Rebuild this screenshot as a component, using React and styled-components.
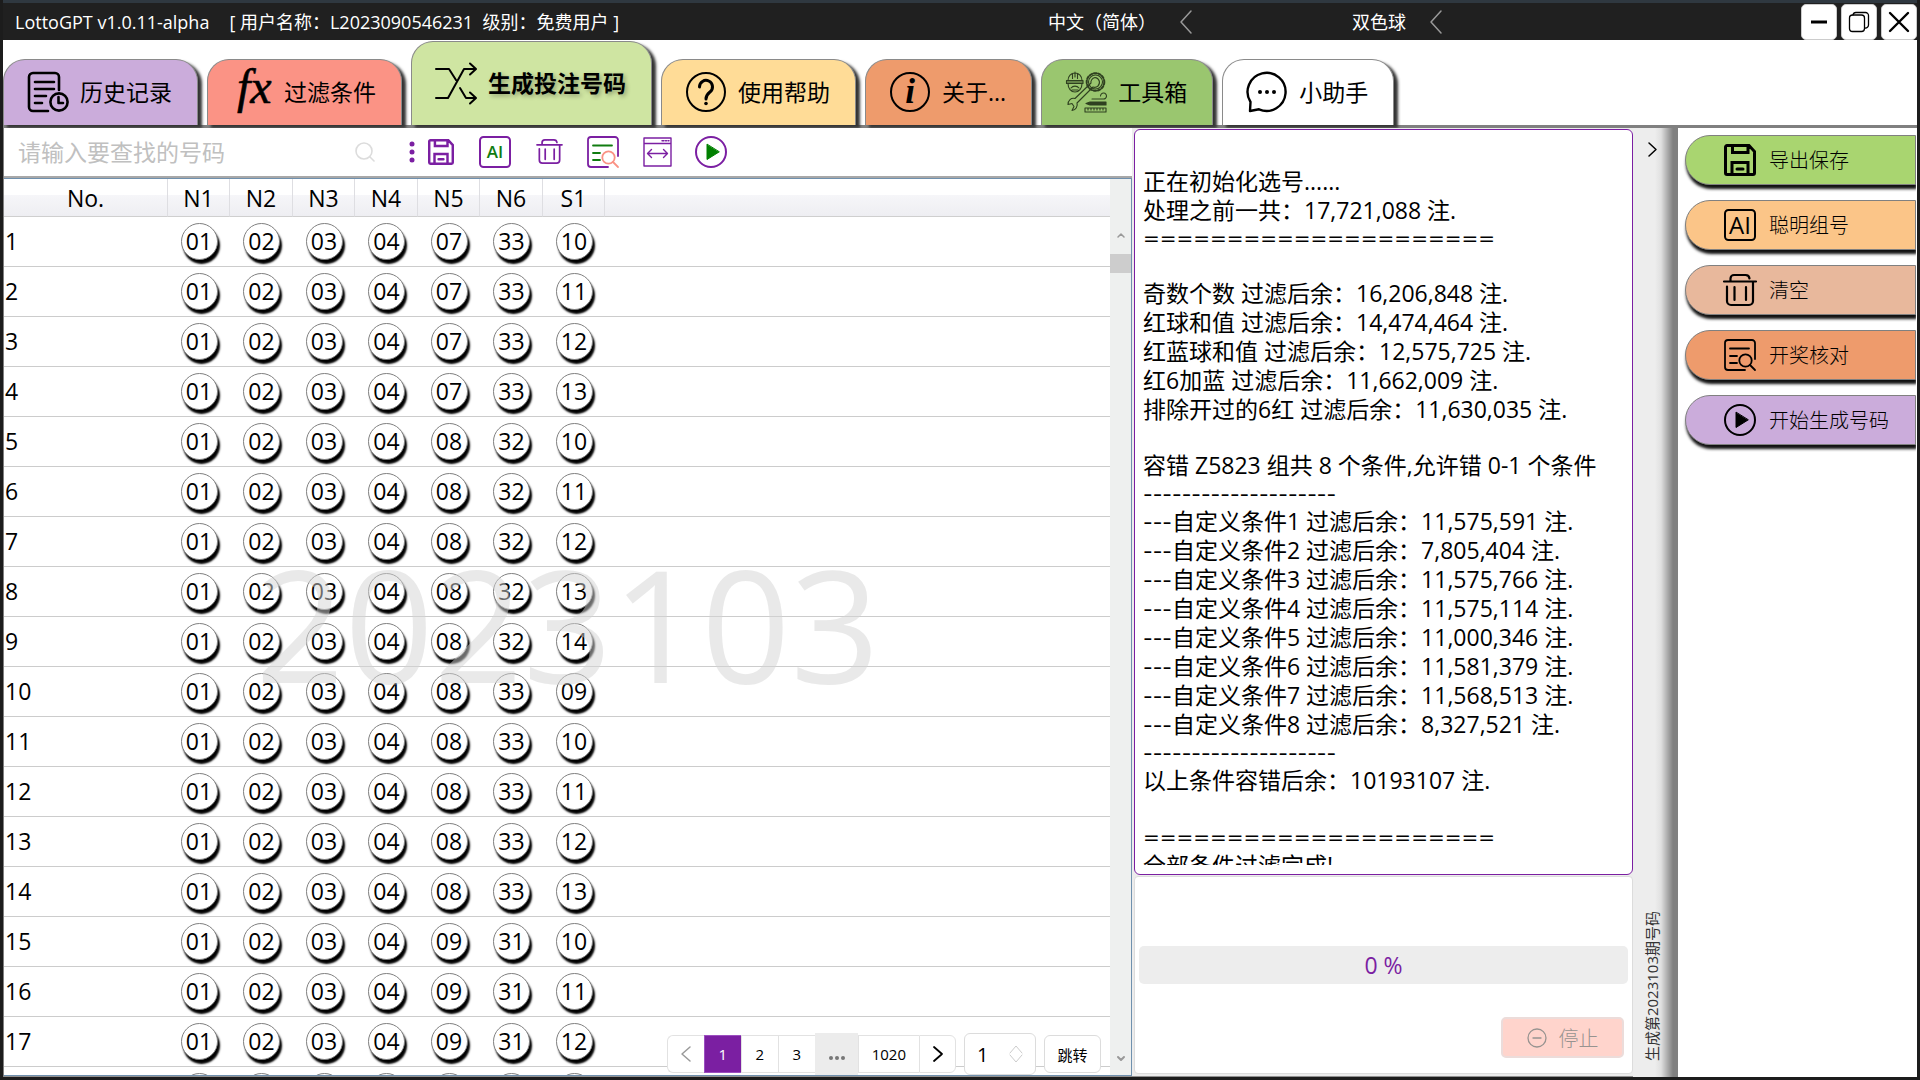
import React, { useState } from "react";
import styled, { createGlobalStyle, css } from "styled-components";

const PURPLE = "#7b1fa2";
const GREEN = "#107c10";
const SALMON = "#fa9284";

const GlobalStyle = createGlobalStyle`
  *, *::before, *::after { box-sizing: border-box; }
  body {
    margin: 0;
    background: #1c1c1c;
    color: #000;
    font-family: "Open Sans", "Noto Sans CJK SC", sans-serif;
    font-size: 23px;
  }
  button, input, select { font: inherit; color: inherit; }
  button { cursor: pointer; }
`;

/* ---------- window frame ---------- */

const Window = styled.div`
  display: flex;
  flex-direction: column;
  height: 100vh;
  padding: 0 3px 3px;
  background: #1c1c1c;
  overflow: hidden;
`;

const TitleBar = styled.header`
  display: flex;
  align-items: center;
  flex: none;
  height: 40px;
  padding-left: 12px;
  border-top: 3px solid #2f3840;
  background: #202020;
  color: #fff;
  font-size: 18px;
  line-height: 24px;
  white-space: pre;
`;

const AppName = styled.h1`
  margin: 0;
  font-size: 18px;
  font-weight: 400;
`;

const Account = styled.span`
  margin-left: 20px;
`;

const Choosers = styled.div`
  display: flex;
  gap: 160px;
  margin-left: auto;
  margin-right: 359px;
`;

const Chooser = styled.label`
  display: flex;
  align-items: center;
  gap: 24px;
`;

const ChooserSelect = styled.select`
  appearance: none;
  field-sizing: content;
  padding: 0;
  border: 0;
  background: transparent;
  color: #fff;
  option { color: #000; }
`;

const WindowButtons = styled.div`
  display: flex;
  gap: 4px;
`;

const WindowButton = styled.button`
  display: grid;
  place-items: center;
  width: 36px;
  height: 36px;
  padding: 0;
  border: 1px solid #ccc;
  border-radius: 5px;
  background: #fff;
  color: #000;
`;

/* ---------- tabs ---------- */

const Tabs = styled.nav`
  display: flex;
  align-items: flex-end;
  gap: 9px;
  flex: none;
  height: 88px;
  border-bottom: 3px solid #808080;
  background: #fff;
`;

const Tab = styled.button`
  display: flex;
  align-items: center;
  gap: 12px;
  height: 66px;
  padding: 0 25px 1px 24px;
  border: 1px solid #8a8a8a;
  border-bottom: 0;
  border-radius: 22px 22px 0 0;
  background: ${(p) => p.$tint};
  box-shadow: 4px 3px 3px #333;
  line-height: 32px;
  white-space: nowrap;
  ${(p) =>
    p.$active &&
    css`
      height: 84px;
      font-weight: 700;
      text-shadow: 2px 2px 4px rgba(0, 0, 0, 0.3);
    `}
`;

/* ---------- body ---------- */

const Body = styled.div`
  display: flex;
  flex: 1;
  min-height: 0;
  background: #fff;
`;

const NumbersPane = styled.main`
  display: flex;
  flex-direction: column;
  flex: 1;
  min-width: 0;
  border-left: 1px solid #808080;
  border-bottom: 1px solid #909090;
`;

const Toolbar = styled.div`
  display: flex;
  align-items: center;
  flex: none;
  height: 50px;
  padding-bottom: 1px;
  border-bottom: 2px solid #a8a8a8;
`;

const Search = styled.label`
  display: flex;
  align-items: center;
  width: 405px;
  padding: 0 34px 0 14px;
`;

const SearchInput = styled.input`
  flex: 1;
  min-width: 0;
  padding: 0;
  border: 0;
  outline: 0;
  background: transparent;
  line-height: 32px;
  &::placeholder { color: #c0c0c0; opacity: 1; }
`;

const ToolButton = styled.button`
  display: grid;
  place-items: center;
  width: 54px;
  height: 47px;
  padding: 0;
  border: 0;
  background: transparent;
`;

const TableFrame = styled.section`
  position: relative;
  display: flex;
  flex: 1;
  min-height: 0;
  border: 1px solid #6f90ae;
  border-left: 0;
  overflow: hidden;
`;

const TableView = styled.div`
  flex: 1;
  min-width: 0;
  overflow: hidden;
`;

const Table = styled.table`
  width: 100%;
  border-collapse: separate;
  border-spacing: 0;
  table-layout: fixed;
  line-height: 32px;
`;

const HeadCell = styled.th`
  height: 38px;
  padding: 0;
  border-right: 1px solid #dedee2;
  border-bottom: 1px solid #cfcfcf;
  background: linear-gradient(#fff 0 42%, #f6f6f9 42%, #eeeef2);
  font-weight: 400;
  &:last-child { border-right: 0; }
`;

const Cell = styled.td`
  height: 50px;
  padding: 0;
  border-bottom: 1px solid #cccccc;
  text-align: center;
`;

const IndexCell = styled(Cell)`
  padding: 0 0 2px 1px;
  text-align: left;
`;

const Ball = styled.span`
  display: grid;
  place-items: center;
  width: 37px;
  height: 37px;
  margin: 0 auto;
  padding-bottom: 2px;
  border: 1px solid #808080;
  border-radius: 50%;
  background: #fff;
  box-shadow: 2px 4px 2px #000;
`;

const Watermark = styled.div`
  position: absolute;
  inset: 0;
  display: grid;
  place-items: center;
  padding-bottom: 8px;
  color: rgba(211, 211, 211, 0.5);
  font-size: 156px;
  line-height: 200px;
  pointer-events: none;
`;

const ScrollTrack = styled.div`
  display: flex;
  flex-direction: column;
  align-items: center;
  flex: none;
  width: 21px;
  padding: 54px 0 14px;
  background: #eef0ef;
`;

const ScrollThumb = styled.div`
  width: 100%;
  height: 19px;
  margin-top: 16px;
  margin-bottom: auto;
  background: #cdcdcd;
`;

const Pager = styled.div`
  position: absolute;
  right: 30px;
  bottom: 0;
  display: flex;
  align-items: center;
  gap: 8px;
  font-size: 15px;
`;

const Pages = styled.div`
  display: flex;
  align-items: center;
`;

const PageButton = styled.button`
  display: grid;
  place-items: center;
  min-width: 37px;
  height: 38px;
  padding: 0 13px;
  border: 1px solid #e2e2e2;
  border-right-width: 0;
  background: #fff;
  line-height: 20px;
  &:first-child { padding: 0; border-radius: 6px 0 0 6px; }
  &:last-child { padding: 0; border-right-width: 1px; border-radius: 0 6px 6px 0; }
  ${(p) =>
    p.$current &&
    css`
      border-color: #9c4fc0;
      background: ${PURPLE};
      color: #fff;
    `}
  ${(p) =>
    p.$more &&
    css`
      height: 42px;
      padding-top: 8px;
      border-color: #ececec;
      background: #ececec;
      color: #777;
    `}
`;

const PageField = styled.label`
  display: flex;
  align-items: center;
  width: 72px;
  height: 42px;
  padding: 0 12px;
  border: 1px solid #dcdcdc;
  border-radius: 6px;
  background: #fff;
  font-size: 20px;
`;

const PageInput = styled.input`
  appearance: textfield;
  flex: 1;
  width: 0;
  padding: 0;
  border: 0;
  outline: 0;
  background: transparent;
  &::-webkit-inner-spin-button { display: none; }
`;

const JumpButton = styled.button`
  width: 57px;
  height: 38px;
  padding: 0;
  border: 1px solid #dcdcdc;
  border-radius: 6px;
  background: #fff;
`;

/* ---------- log ---------- */

const LogPane = styled.section`
  display: flex;
  flex-direction: column;
  flex: none;
  width: 501px;
  gap: 1px;
  padding: 1px 0 2px 2px;
  border-bottom: 1px solid #909090;
  background: #ececec;
`;

const LogBox = styled.div`
  flex: 1;
  min-height: 0;
  padding: 8px 8px 9px;
  border: 1px solid ${PURPLE};
  border-radius: 6px;
  background: #fff;
`;

const LogScroll = styled.div`
  height: 100%;
  overflow: hidden;
  white-space: pre;
`;

const LogLine = styled.div`
  height: 29px;
  line-height: 29px;
`;

const LogRule = styled.div`
  height: 27px;
  line-height: 27px;
`;

const DoubleRule = styled(LogRule)`
  font-family: "DejaVu Sans", sans-serif;
  font-size: 20px;
`;

const Dashes = styled.span`
  font-family: Inter, sans-serif;
  font-size: 21px;
`;

const StatusBox = styled.div`
  display: flex;
  flex-direction: column;
  flex: none;
  height: 198px;
  padding: 69px 4px 15px;
  border: 1px solid #dcdcdc;
  border-radius: 4px;
  background: #fff;
`;

const Progress = styled.div`
  display: grid;
  place-items: center;
  height: 38px;
  border-radius: 5px;
  background: #ededed;
  color: ${PURPLE};
  line-height: 32px;
`;

const StopButton = styled.button`
  display: flex;
  align-items: center;
  justify-content: center;
  gap: 12px;
  width: 123px;
  height: 41px;
  margin: auto 4px 0 auto;
  padding: 0;
  border: 2px solid #ecdcda;
  border-radius: 5px;
  background: #ffd4cc;
  color: #979390;
  font-size: 20px;
  font-weight: 300;
`;

const Strip = styled.aside`
  display: flex;
  flex-direction: column;
  align-items: center;
  justify-content: space-between;
  flex: none;
  width: 45px;
  padding: 14px 2px 16px 0;
  border-right: 5px solid #808080;
  background: linear-gradient(90deg, #ededed 0 22px, #e0e0e0 28px, #b0b0b0 34px, #808080 40px);
  font-size: 15px;
`;

const StripButton = styled.button`
  display: grid;
  padding: 0;
  border: 0;
  background: transparent;
`;

const StripText = styled.span`
  writing-mode: vertical-rl;
  text-orientation: sideways;
  transform: rotate(180deg);
  color: #333;
  line-height: 20px;
`;

/* ---------- actions ---------- */

const Actions = styled.aside`
  display: flex;
  flex-direction: column;
  gap: 15px;
  flex: none;
  width: 239px;
  padding: 7px 1px 0 7px;
`;

const Action = styled.button`
  display: flex;
  align-items: center;
  gap: 13px;
  height: 50px;
  padding: 0 0 1px 38px;
  border: 1px solid #808080;
  border-radius: 25px 0 0 25px;
  background: ${(p) => p.$tint};
  box-shadow: 1px 4px 3px #111;
  font-size: 20px;
  font-weight: 300;
  white-space: nowrap;
  clip-path: inset(0 0 -10px -10px);
`;

/* ---------- icons ---------- */

const Svg = ({ w = 40, h = w, box = `0 0 ${w} ${h}`, sw = 2, children }) => (
  <svg
    width={w}
    height={h}
    viewBox={box}
    fill="none"
    stroke="currentColor"
    strokeWidth={sw}
    strokeLinecap="round"
    strokeLinejoin="round"
    aria-hidden="true"
    style={{ flex: "none", overflow: "visible" }}
  >
    {children}
  </svg>
);

const HistoryIcon = () => (
  <Svg sw={2.6}>
    <path d="M31 18V5a4 4 0 0 0-4-4H5a4 4 0 0 0-4 4v30a4 4 0 0 0 4 4h15M7 10h19M7 17h19M7 24h11M7 31h7" />
    <circle cx="31" cy="30" r="8.6" />
    <path d="M30.500 25v6h4.500" />
  </Svg>
);

const FxIcon = () => (
  <Svg>
    <text x="5" y="31" fill="#000" stroke="#000" strokeWidth="0.600" fontFamily="Liberation Serif, serif" fontStyle="italic" fontSize="48">fx</text>
  </Svg>
);

const ShuffleIcon = () => (
  <Svg sw={2}>
    <path d="M0 6h13l7 11M24 25l6 10h9M0 35h12L28 6h11M34 0.500l6 5.500-6 5.500M34 29.500l6 5.500-6 5.500" />
  </Svg>
);

const HelpIcon = () => (
  <Svg>
    <circle cx="20" cy="20" r="19" />
    <path strokeWidth="3" d="M13.500 15a6.500 6.500 0 1 1 10.500 5c-2.500 2-4 3-4 7" />
    <circle cx="20" cy="31.500" r="1.800" fill="currentColor" stroke="none" />
  </Svg>
);

const InfoIcon = () => (
  <Svg>
    <circle cx="20" cy="20" r="19" />
    <text x="20" y="31" textAnchor="middle" fill="#000" stroke="none" fontFamily="Liberation Serif, serif" fontStyle="italic" fontWeight="700" fontSize="35">i</text>
  </Svg>
);

const ToolsIcon = () => (
  <Svg sw={1.1}>
    <g stroke="#2f4020">
      <path d="M2 8.500C2 4 5 1 9 1s7 3 7 7.500M6.500 1.500v5M9 0v5M11.500 1.500v5M0.500 8.500h16.500v3H0.500zM0.500 10h16.500M2 11.500c0 5 3 8.500 7 8.500s7-3.500 7-8.500M5 16c2-2.500 6-2.500 8 0M6 18h6" />
      <circle cx="29.500" cy="10" r="8.800" strokeDasharray="2.600 1.800" strokeWidth="2" />
      <circle cx="29.500" cy="10" r="7" />
      <path d="M29 5.500a5 5 0 0 1 3 8.500 5 5 0 0 1-5 1L11 31c1 3-1 7-5 7.500l2-4-2-3-4 1c0-4 3-7 7-6L25 11c-.500-2 1-5 4-5.500z" />
      <path d="M19 36h21v4H19zM22 36v2M25 36v2M28 36v2M31 36v2M34 36v2M37 36v2M26 27h11a3 3 0 1 0-2.500-3" />
      <path d="M20 31.500l4-1.500h16v3H24z" fill="#2f4020" />
    </g>
  </Svg>
);

const ChatIcon = () => (
  <Svg sw={2.4}>
    <path d="M3.500 30A19 19 0 1 1 12 37.300L3 39z" />
    <g fill="currentColor" stroke="none">
      <circle cx="13" cy="20" r="2" />
      <circle cx="20" cy="20" r="2" />
      <circle cx="27" cy="20" r="2" />
    </g>
  </Svg>
);

const SaveIcon = ({ size = 32, color = "#000" }) => (
  <Svg w={size} box="0 0 32 32" sw={3}>
    <path stroke={color} strokeLinejoin="miter" d="M3 1.500h22l5.500 6V29a1.500 1.500 0 0 1-1.500 1.500H3A1.500 1.500 0 0 1 1.500 29V3A1.500 1.500 0 0 1 3 1.500zM8.500 2v6.500H24V2M8 30V18.500h16V30M13 25h6" />
  </Svg>
);

const AiIcon = ({ color = "#000", letters = color, small }) => (
  <Svg w={32} sw={2}>
    <rect x="1" y="1" width="30" height="30" rx="3.500" stroke={color} />
    <text x="16" y={small ? 22 : 24.5} textAnchor="middle" fill={letters} stroke="none" fontSize={small ? 17 : 24} fontWeight={small ? 600 : 400}>AI</text>
  </Svg>
);

const TrashIcon = ({ size = 32, color = "#000" }) => (
  <Svg w={size} box="0 0 32 32" sw={2.2}>
    <path stroke={color} d="M0 7.500h32M6.500 7V4.500a3.500 3.500 0 0 1 3.500-3.500h11.500a4 4 0 0 1 4 3.500M3 12.500V27a4 4 0 0 0 4 4h18a4 4 0 0 0 4-4V8M10.500 13v13M22 13v13" />
  </Svg>
);

const CheckIcon = ({ color = "#000", lines = color, lens = color }) => (
  <Svg w={32} sw={1.8}>
    <path stroke={color} d="M31 20V4a3 3 0 0 0-3-3H4a3 3 0 0 0-3 3v24a3 3 0 0 0 3 3h17" />
    <path stroke={lines} d="M6 9.500h19M6 17h7M6 24h7" />
    <g stroke={lens}>
      <circle cx="21.500" cy="21.500" r="6.200" />
      <path d="M26 26l5 5" />
    </g>
  </Svg>
);

const FitIcon = () => (
  <Svg w={29} sw={1.4}>
    <path stroke={PURPLE} d="M1 1h27v28H1zM1 6.500h27M19 3.800h2M22.500 3.800h1M25 3.800h1M5 16.500h19M8.500 12.500l-4 4 4 4M20.500 12.500l4 4-4 4" />
  </Svg>
);

const PlayIcon = ({ color = "#000", fill = color }) => (
  <Svg w={32} sw={2}>
    <circle cx="16" cy="16" r="15" stroke={color} />
    <path d="M12 8.500v15l12-7.500z" fill={fill} stroke={fill} strokeWidth="1" />
  </Svg>
);

const Chevron = ({ w = 12, h = 20, dir = "left", color = "#000", sw = 1.5 }) => {
  const d = {
    left: `M${w - 1} 1L1 ${h / 2}L${w - 1} ${h - 1}`,
    right: `M1 1L${w - 1} ${h / 2}L1 ${h - 1}`,
    up: `M1 ${h - 1}L${w / 2} 1L${w - 1} ${h - 1}`,
    down: `M1 1L${w / 2} ${h - 1}L${w - 1} 1`,
  }[dir];
  return (
    <Svg w={w} h={h} sw={sw}>
      <path stroke={color} d={d} />
    </Svg>
  );
};

/* ---------- data ---------- */

const tabs = [
  { label: "历史记录", tint: "#cbacdb", Icon: HistoryIcon },
  { label: "过滤条件", tint: "#fb9385", Icon: FxIcon },
  { label: "生成投注号码", tint: "#cfe5a2", Icon: ShuffleIcon },
  { label: "使用帮助", tint: "#ffdc97", Icon: HelpIcon },
  { label: "关于...", tint: "#ee9b6c", Icon: InfoIcon },
  { label: "工具箱", tint: "#9ac66f", Icon: ToolsIcon },
  { label: "小助手", tint: "#ffffff", Icon: ChatIcon },
];

const columns = ["N1", "N2", "N3", "N4", "N5", "N6", "S1"];

const rows = [
  ["07", "33", ["10", "11", "12", "13"]],
  ["08", "32", ["10", "11", "12", "13", "14"]],
  ["08", "33", ["09", "10", "11", "12", "13"]],
  ["09", "31", ["10", "11", "12", "13"]],
].flatMap(([n5, n6, specials]) => specials.map((s) => ["01", "02", "03", "04", n5, n6, s]));

const log = [
  { text: "" },
  { text: "正在初始化选号......" },
  { text: "处理之前一共：17,721,088 注." },
  { double: 21 },
  { gap: true },
  { text: "奇数个数 过滤后余：16,206,848 注." },
  { text: "红球和值 过滤后余：14,474,464 注." },
  { text: "红蓝球和值 过滤后余：12,575,725 注." },
  { text: "红6加蓝 过滤后余：11,662,009 注." },
  { text: "排除开过的6红 过滤后余：11,630,035 注." },
  { gap: true },
  { text: "容错 Z5823 组共 8 个条件,允许错 0-1 个条件" },
  { single: 20 },
  ...["11,575,591", "7,805,404", "11,575,766", "11,575,114", "11,000,346", "11,581,379", "11,568,513", "8,327,521"].map(
    (count, i) => ({ dashes: 3, text: `自定义条件${i + 1} 过滤后余：${count} 注.` })
  ),
  { single: 20 },
  { text: "以上条件容错后余：10193107 注." },
  { text: "" },
  { double: 21 },
  { text: "全部条件过滤完成!" },
];

const LogEntry = ({ line }) => {
  if (line.gap) return <LogRule />;
  if (line.double) return <DoubleRule>{"=".repeat(line.double)}</DoubleRule>;
  if (line.single) return <LogRule><Dashes>{"-".repeat(line.single)}</Dashes></LogRule>;
  return (
    <LogLine>
      {line.dashes && <Dashes>{"-".repeat(line.dashes)}</Dashes>}
      {line.text}
    </LogLine>
  );
};

const actions = [
  { label: "导出保存", tint: "#a9d570", icon: <SaveIcon /> },
  { label: "聪明组号", tint: "#fbc588", icon: <AiIcon /> },
  { label: "清空", tint: "#e8b89c", icon: <TrashIcon /> },
  { label: "开奖核对", tint: "#ee9b6c", icon: <CheckIcon /> },
  { label: "开始生成号码", tint: "#cbacdb", icon: <PlayIcon /> },
];

const tools = [
  { label: "保存", icon: <SaveIcon size={26} color={PURPLE} /> },
  { label: "聪明组号", icon: <AiIcon color={PURPLE} letters={GREEN} small /> },
  { label: "清空", icon: <TrashIcon size={25} color={PURPLE} /> },
  { label: "开奖核对", icon: <CheckIcon color={PURPLE} lines={GREEN} lens={SALMON} /> },
  { label: "列宽", icon: <FitIcon /> },
  { label: "开始", icon: <PlayIcon color={PURPLE} fill="#008000" /> },
];

export default function App() {
  const [active, setActive] = useState(2);
  const [page, setPage] = useState("1");

  return (
    <>
      <GlobalStyle />
      <Window>
        <TitleBar>
          <AppName>LottoGPT v1.0.11-alpha</AppName>
          <Account>[ 用户名称：L2023090546231  级别：免费用户 ]</Account>
          <Choosers>
            <Chooser>
              <ChooserSelect aria-label="语言">
                <option>中文（简体）</option>
              </ChooserSelect>
              <Chevron h={24} color="#999" />
            </Chooser>
            <Chooser>
              <ChooserSelect aria-label="彩种">
                <option>双色球</option>
              </ChooserSelect>
              <Chevron h={24} color="#999" />
            </Chooser>
          </Choosers>
          <WindowButtons>
            <WindowButton aria-label="最小化">
              <Svg w={20} sw={3}><path strokeLinecap="butt" d="M2 10h16" /></Svg>
            </WindowButton>
            <WindowButton aria-label="还原">
              <Svg w={20} sw={1.3}>
                <rect x="0.500" y="3" width="15" height="16.500" rx="3" />
                <path d="M4 3a3 3 0 0 1 3-2.500h9.500a3 3 0 0 1 3 3V13a3 3 0 0 1-3.500 3" />
              </Svg>
            </WindowButton>
            <WindowButton aria-label="关闭">
              <Svg w={20} sw={2.4}><path d="M1 1l18 18M19 1L1 19" /></Svg>
            </WindowButton>
          </WindowButtons>
        </TitleBar>

        <Tabs>
          {tabs.map(({ label, tint, Icon }, i) => (
            <Tab key={label} $tint={tint} $active={i === active} onClick={() => setActive(i)}>
              <Icon />
              {label}
            </Tab>
          ))}
        </Tabs>

        <Body>
          <NumbersPane>
            <Toolbar>
              <Search>
                <SearchInput placeholder="请输入要查找的号码" aria-label="请输入要查找的号码" />
                <Svg w={20} sw={1.6}>
                  <g stroke="#dcdcdc">
                    <circle cx="9" cy="9" r="8" />
                    <path d="M15 15l4 4" />
                  </g>
                </Svg>
              </Search>
              <Svg w={5} h={22}>
                <g fill={PURPLE} stroke="none">
                  <circle cx="3" cy="3" r="2.500" />
                  <circle cx="3" cy="11" r="2.500" />
                  <circle cx="3" cy="19" r="2.500" />
                </g>
              </Svg>
              {tools.map(({ label, icon }) => (
                <ToolButton key={label} aria-label={label}>{icon}</ToolButton>
              ))}
            </Toolbar>

            <TableFrame>
              <TableView>
                <Table>
                  <colgroup>
                    <col style={{ width: 164 }} />
                    {columns.map((name, i) => (
                      <col key={name} style={{ width: i % 2 ? 63 : 62 }} />
                    ))}
                    <col />
                  </colgroup>
                  <thead>
                    <tr>
                      <HeadCell>No.</HeadCell>
                      {columns.map((name) => (
                        <HeadCell key={name}>{name}</HeadCell>
                      ))}
                      <HeadCell />
                    </tr>
                  </thead>
                  <tbody>
                    {rows.map((row, i) => (
                      <tr key={i}>
                        <IndexCell>{i + 1}</IndexCell>
                        {row.map((n, j) => (
                          <Cell key={j}><Ball>{n}</Ball></Cell>
                        ))}
                        <Cell />
                      </tr>
                    ))}
                  </tbody>
                </Table>
              </TableView>
              <ScrollTrack>
                <Chevron w={8} h={5} dir="up" color="#999" />
                <ScrollThumb />
                <Chevron w={8} h={5} dir="down" color="#999" sw={2} />
              </ScrollTrack>
              <Watermark>2023103</Watermark>
              <Pager>
                <Pages>
                  <PageButton aria-label="上一页"><Chevron w={10} h={16} color="#999" /></PageButton>
                  <PageButton $current>1</PageButton>
                  <PageButton>2</PageButton>
                  <PageButton>3</PageButton>
                  <PageButton $more aria-label="更多">
                    <Svg w={16} h={4}>
                      <g fill="#777" stroke="none">
                        <circle cx="2" cy="2" r="2" />
                        <circle cx="8" cy="2" r="2" />
                        <circle cx="14" cy="2" r="2" />
                      </g>
                    </Svg>
                  </PageButton>
                  <PageButton>1020</PageButton>
                  <PageButton aria-label="下一页"><Chevron w={10} h={16} dir="right" sw={1.8} /></PageButton>
                </Pages>
                <PageField>
                  <PageInput type="number" aria-label="页码" value={page} onChange={(e) => setPage(e.target.value)} />
                  <Svg w={14} h={18} sw={1}><path stroke="#ccc" d="M1 8l6-7 6 7M1 10l6 7 6-7" /></Svg>
                </PageField>
                <JumpButton>跳转</JumpButton>
              </Pager>
            </TableFrame>
          </NumbersPane>

          <LogPane>
            <LogBox>
              <LogScroll>
                {log.map((line, i) => (
                  <LogEntry key={i} line={line} />
                ))}
              </LogScroll>
            </LogBox>
            <StatusBox>
              <Progress role="progressbar" aria-valuenow={0}>0 %</Progress>
              <StopButton disabled>
                <Svg w={20} sw={1.3}>
                  <circle cx="10" cy="10" r="9" />
                  <path d="M6 10h8" />
                </Svg>
                停止
              </StopButton>
            </StatusBox>
          </LogPane>

          <Strip>
            <StripButton aria-label="收起"><Chevron w={9} h={15} dir="right" /></StripButton>
            <StripText>生成第2023103期号码</StripText>
          </Strip>

          <Actions>
            {actions.map(({ label, tint, icon }) => (
              <Action key={label} $tint={tint}>
                {icon}
                {label}
              </Action>
            ))}
          </Actions>
        </Body>
      </Window>
    </>
  );
}
